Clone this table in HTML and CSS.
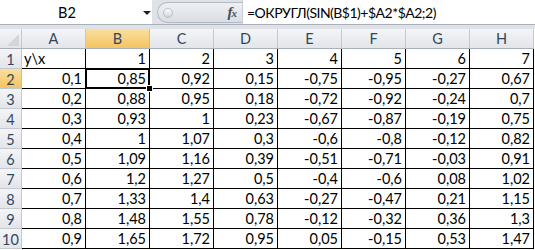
FILE: index.html
```html
<!DOCTYPE html>
<html>
  <head>
    <meta charset="utf-8">
    <title>Книга1 - Excel</title>
    <link rel="stylesheet" href="styles.css">

    <script type="text/javascript">
      const columns = ['A', 'B', 'C', 'D', 'E', 'F', 'G', 'H'];

      const rows = [
        ['y\\x', '1', '2', '3', '4', '5', '6', '7'],
        ['0,1', '0,85', '0,92', '0,15', '-0,75', '-0,95', '-0,27', '0,67'],
        ['0,2', '0,88', '0,95', '0,18', '-0,72', '-0,92', '-0,24', '0,7'],
        ['0,3', '0,93', '1', '0,23', '-0,67', '-0,87', '-0,19', '0,75'],
        ['0,4', '1', '1,07', '0,3', '-0,6', '-0,8', '-0,12', '0,82'],
        ['0,5', '1,09', '1,16', '0,39', '-0,51', '-0,71', '-0,03', '0,91'],
        ['0,6', '1,2', '1,27', '0,5', '-0,4', '-0,6', '0,08', '1,02'],
        ['0,7', '1,33', '1,4', '0,63', '-0,27', '-0,47', '0,21', '1,15'],
        ['0,8', '1,48', '1,55', '0,78', '-0,12', '-0,32', '0,36', '1,3'],
        ['0,9', '1,65', '1,72', '0,95', '0,05', '-0,15', '0,53', '1,47'],
      ];

      const active = { col: 1, row: 2 };

      function makeCell(className, text) {
        const cell = document.createElement('div');
        cell.className = className;
        cell.textContent = text;
        return cell;
      }

      function buildSheet() {
        const $sheet = document.getElementById('sheet');

        $sheet.appendChild(makeCell('corner', ''));

        columns.forEach((name, i) => {
          const selected = i === active.col ? ' head--selected' : '';
          $sheet.appendChild(makeCell('head head--col' + selected, name));
        });

        rows.forEach((values, r) => {
          const rowNumber = r + 1;
          const selected = rowNumber === active.row ? ' head--selected' : '';
          $sheet.appendChild(makeCell('head head--row' + selected, rowNumber));

          values.forEach((value, c) => {
            let className = 'cell';
            if (rowNumber === 1 && c === 0) {
              className += ' cell--text';
            }
            if (rowNumber === active.row && c === active.col) {
              className += ' cell--active';
            }
            $sheet.appendChild(makeCell(className, value));
          });
        });
      }

      document.addEventListener('DOMContentLoaded', (event) => {
        buildSheet();
      });
    </script>
  </head>

  <body>
    <div class="formula-bar">
      <div class="name-box">
        <span class="name-box__value">B2</span>
        <span class="name-box__arrow"></span>
      </div>

      <div class="formula-bar__tools">
        <span class="formula-bar__grip"></span>
        <span class="formula-bar__fx">f<span class="formula-bar__x">x</span></span>
      </div>

      <div class="formula-bar__input">=ОКРУГЛ(SIN(B$1)+$A2*$A2;2)</div>
    </div>

    <div class="formula-bar__gap"></div>

    <div id="sheet" class="sheet"></div>
  </body>
</html>
```

FILE: styles.css
```css
:root {
  --chrome: #dfe3e8;
  --chrome-line: #a9b0ba;
  --head-top: #f4f5f7;
  --head-bottom: #e2e5e9;
  --head-line: #c3c8ce;
  --head-text: #34465c;
  --gold-top: #fadf9e;
  --gold-bottom: #f3c462;
  --gold-line: #e9b95a;
  --black: #000000;
  --white: #ffffff;
}

body {
  margin: 0;
  width: 535px;
  height: 250px;
  overflow: hidden;
  background: var(--white);
  font-family: Lato, 'Open Sans', sans-serif;
  font-size: 14.5px;
  color: var(--black);
}

.formula-bar {
  display: flex;
  height: 24px;
  border-bottom: 1px solid var(--chrome-line);
  background: var(--chrome);
}

.name-box {
  display: flex;
  align-items: center;
  width: 152px;
  background: var(--white);
}

.name-box__value {
  width: 134px;
  text-align: center;
}

.name-box__arrow {
  margin-left: 9px;
  margin-top: 2px;
  width: 0;
  height: 0;
  border-left: 4px solid transparent;
  border-right: 4px solid transparent;
  border-top: 4px solid #222;
}

.formula-bar__tools {
  display: flex;
  align-items: center;
  justify-content: space-between;
  box-sizing: border-box;
  width: 85px;
  height: 21px;
  margin: 2px 0 0 5px;
  padding: 0 6px 0 5px;
  border: 1px solid #b4bac3;
  border-right: none;
  border-radius: 11px 0 0 11px;
  background: linear-gradient(#eef0f3, #dadee3);
}

.formula-bar__grip {
  width: 8px;
  height: 8px;
  border-radius: 50%;
  border: 1px solid #b9bfc7;
  background: linear-gradient(#ffffff, #cfd4da);
}

.formula-bar__fx {
  font-family: 'Liberation Serif', serif;
  font-style: italic;
  font-weight: bold;
  font-size: 15px;
  color: #4a4f57;
  letter-spacing: -1px;
}

.formula-bar__x {
  font-size: 11px;
}

.formula-bar__input {
  flex: 1;
  display: flex;
  align-items: center;
  padding-left: 4px;
  background: var(--white);
  border-left: 1px solid #c7ccd3;
  font-size: 14px;
  letter-spacing: -0.5px;
}

.formula-bar__gap {
  height: 4px;
  background: var(--chrome);
}

.sheet {
  display: grid;
  grid-template-columns: 22px repeat(8, 64px);
  grid-auto-rows: 20px;
}

.corner,
.head,
.cell {
  box-sizing: border-box;
  border-right: 1px solid var(--head-line);
  border-bottom: 1px solid var(--head-line);
}

.corner {
  position: relative;
  background: linear-gradient(var(--head-top), var(--head-bottom));
  border-bottom-color: #a8b0bb;
}

.corner::after {
  content: '';
  position: absolute;
  right: 2px;
  bottom: 2px;
  border-left: 12px solid transparent;
  border-bottom: 12px solid #d2d6db;
}

.head {
  display: flex;
  align-items: center;
  justify-content: center;
  background: linear-gradient(var(--head-top), var(--head-bottom));
  color: var(--head-text);
}

.head--col {
  border-bottom-color: #a8b0bb;
}

.head--row {
  padding-top: 1px;
}

.head--selected {
  background: linear-gradient(var(--gold-top), var(--gold-bottom));
  border-right-color: var(--gold-line);
}

.cell {
  display: flex;
  align-items: flex-end;
  justify-content: flex-end;
  padding: 0 3px 1px 2px;
  line-height: 17px;
  border-color: var(--black);
}

.cell--text {
  justify-content: flex-start;
}

.cell--active {
  position: relative;
}

.cell--active::before {
  content: '';
  position: absolute;
  top: -1px;
  left: -1px;
  right: -1px;
  bottom: -1px;
  border: 2px solid var(--black);
}

.cell--active::after {
  content: '';
  position: absolute;
  right: -4px;
  bottom: -4px;
  width: 5px;
  height: 5px;
  background: var(--black);
  border: 1px solid var(--white);
}
```
